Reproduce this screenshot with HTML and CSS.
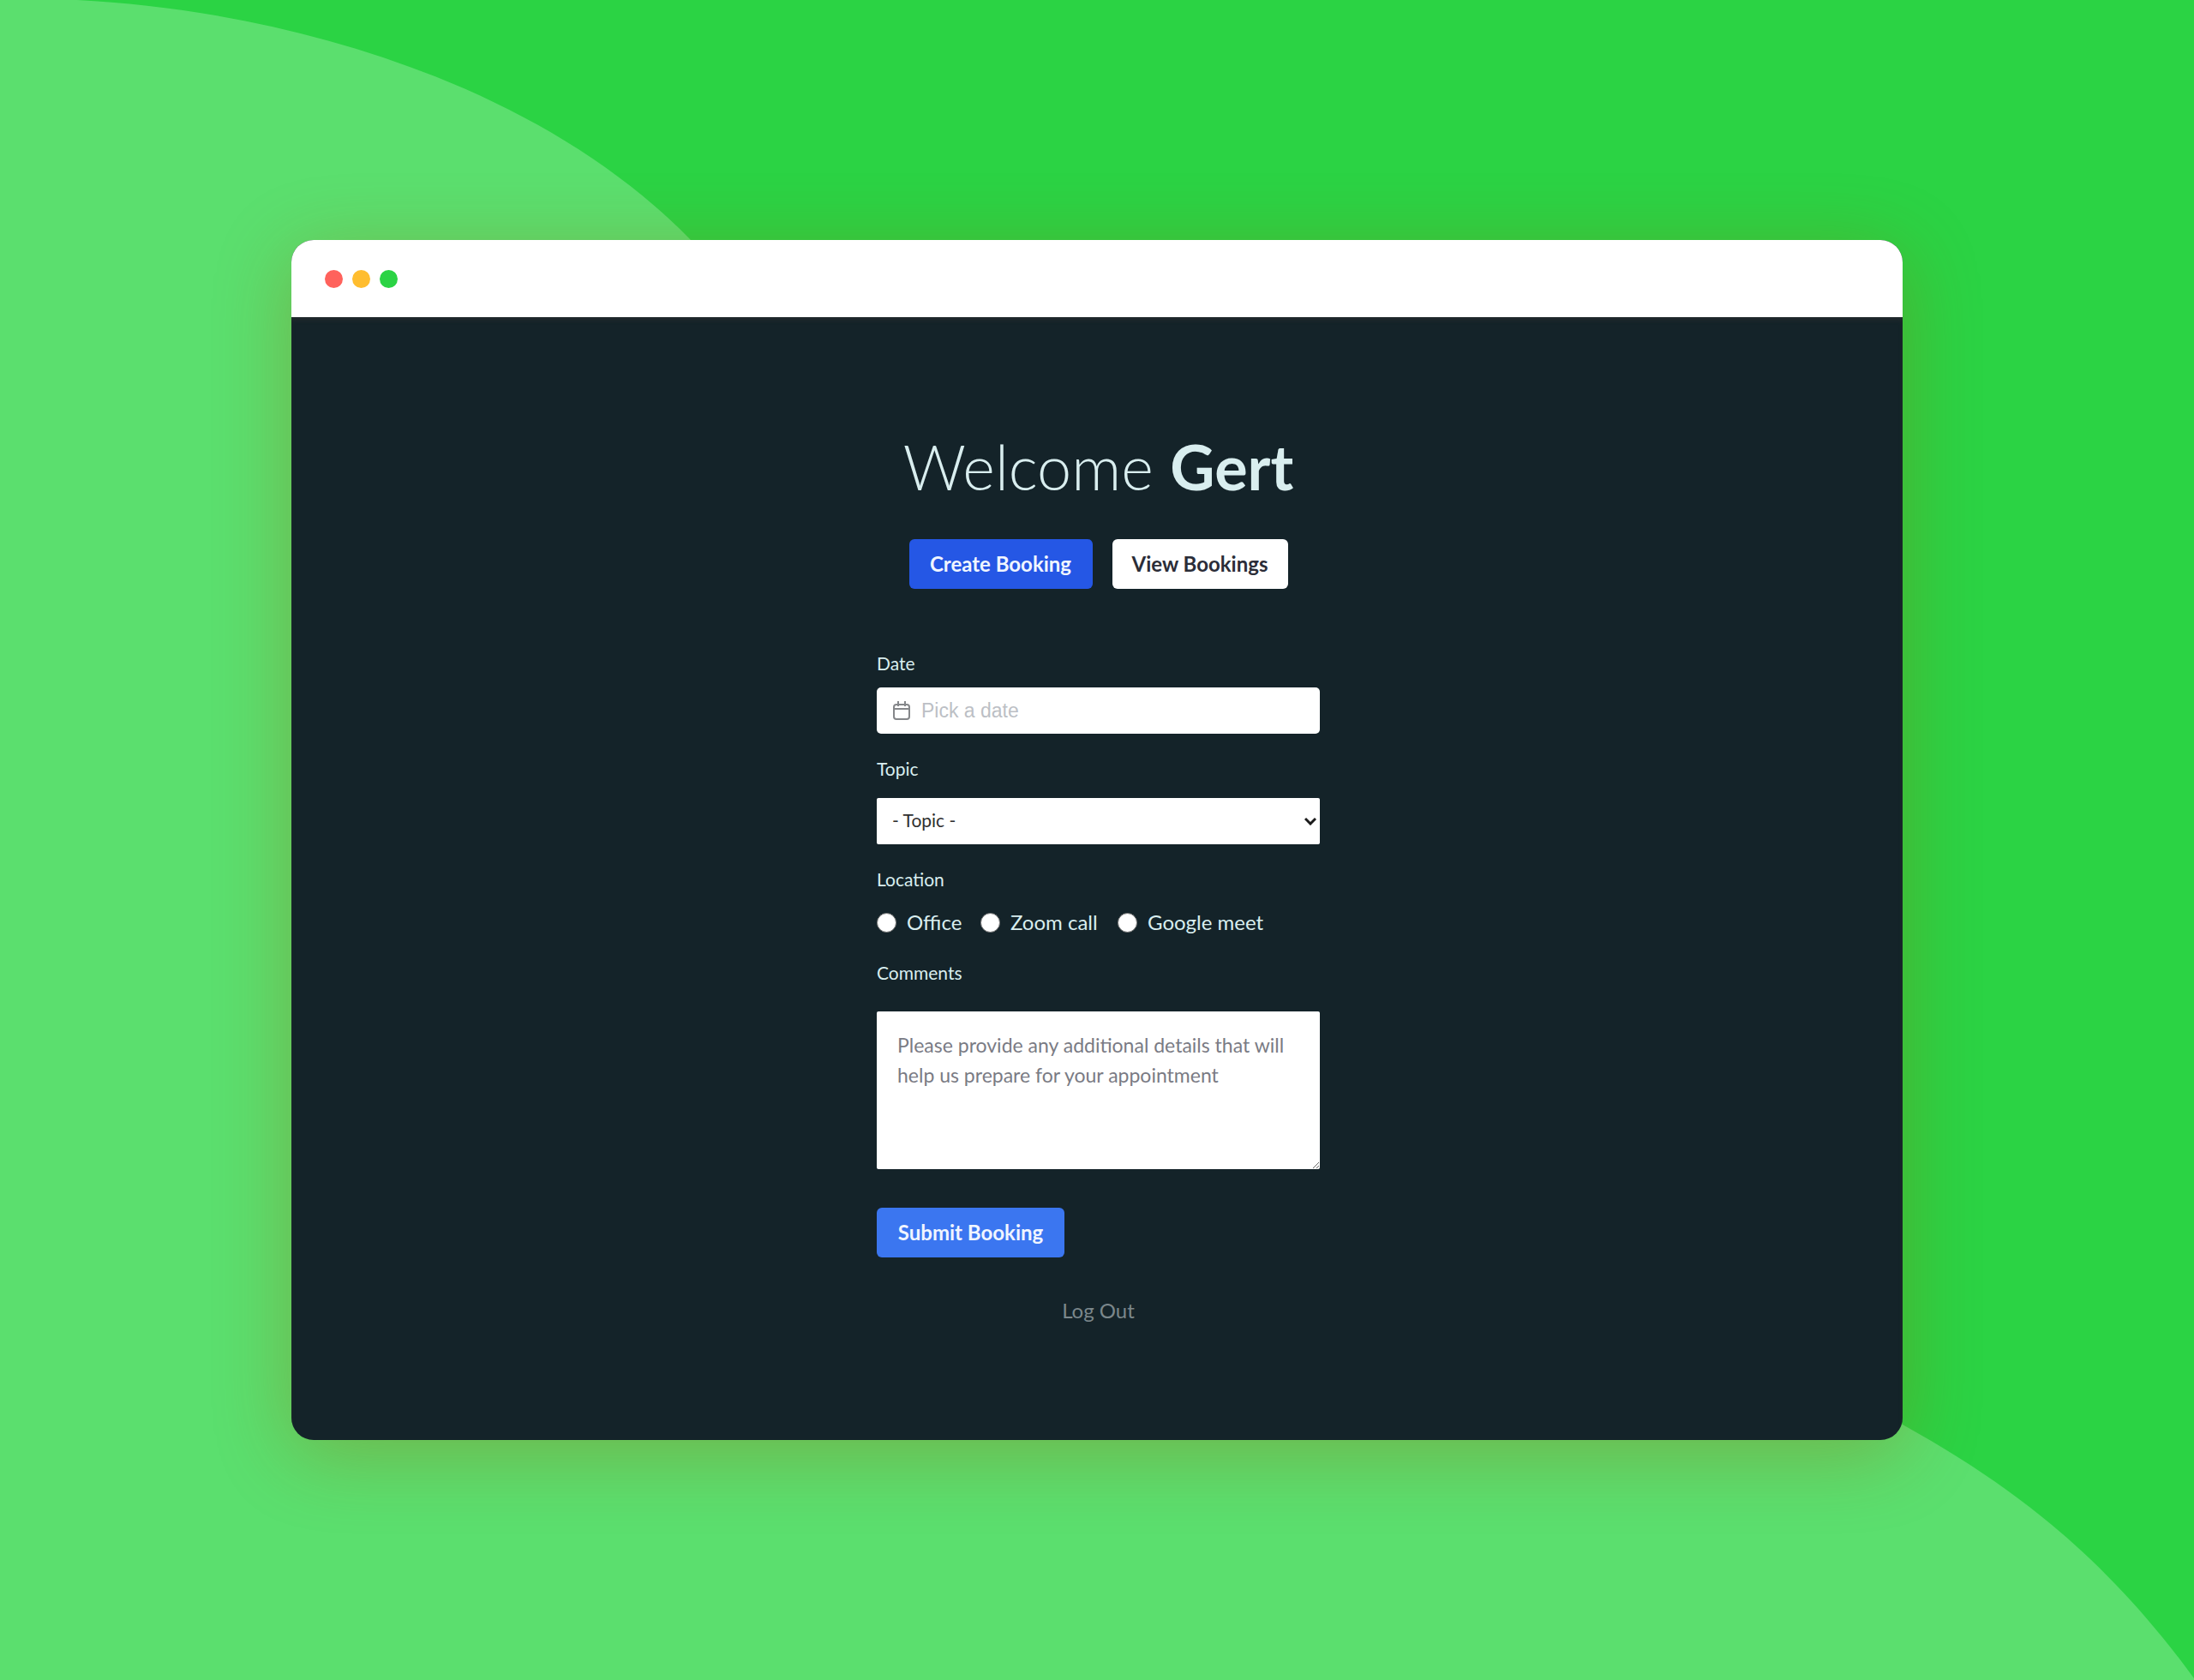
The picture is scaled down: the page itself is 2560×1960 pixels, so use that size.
FILE: index.html
```html
<!DOCTYPE html>
<html lang="en">
<head>
<meta charset="utf-8">
<meta name="viewport" content="width=device-width, initial-scale=1">
<title>Bookings</title>
<link rel="stylesheet" href="styles.css">
</head>
<body>
<div class="stage">
  <svg class="backdrop" viewBox="0 0 2560 1960" preserveAspectRatio="none" aria-hidden="true">
    <path fill="#5bdf6e" d="M0 0H90C330 12 626 95 806 280C960 480 900 900 1200 1200C1500 1400 1900 1480 2220 1662C2338 1728 2450 1807 2560 1958V1960H0Z"/>
  </svg>
  <div class="window">
    <div class="titlebar">
      <span class="dot dot-close"></span>
      <span class="dot dot-minimize"></span>
      <span class="dot dot-zoom"></span>
    </div>
    <main class="content">
      <h1 class="title">Welcome <strong>Gert</strong></h1>
      <nav class="tabs">
        <button type="button" class="button button-active tab-create">Create Booking</button>
        <button type="button" class="button button-plain tab-view">View Bookings</button>
      </nav>
      <form class="form">
        <div class="field">
          <label class="label" for="date">Date</label>
          <div class="date-box">
            <svg class="calendar" viewBox="0 0 22 24" fill="none" stroke="#85878a" stroke-width="2" aria-hidden="true">
              <rect x="2" y="5" width="18" height="17" rx="3"/>
              <path d="M2 10H20M7 1V7M15 1V7"/>
            </svg>
            <input class="date-input" id="date" type="text" placeholder="Pick a date">
          </div>
        </div>
        <div class="field field-topic">
          <label class="label" for="topic">Topic</label>
          <div class="select-box">
            <select class="select" id="topic"><option>- Topic -</option></select>
            <svg class="chevron" viewBox="0 0 14 10" fill="none" stroke="#1b1b1b" stroke-width="3" aria-hidden="true"><path d="M1 2L7 8L13 2"/></svg>
          </div>
        </div>
        <fieldset class="field field-location">
          <legend class="label">Location</legend>
          <div class="radios">
            <label class="radio-label"><input class="radio" type="radio" name="location">Office</label>
            <label class="radio-label"><input class="radio" type="radio" name="location">Zoom call</label>
            <label class="radio-label"><input class="radio" type="radio" name="location">Google meet</label>
          </div>
        </fieldset>
        <div class="field field-comments">
          <label class="label" for="comments">Comments</label>
          <textarea class="comments" id="comments" placeholder="Please provide any additional details that will help us prepare for your appointment"></textarea>
        </div>
        <button type="submit" class="button button-submit">Submit Booking</button>
      </form>
      <a class="logout" href="#">Log Out</a>
    </main>
  </div>
</div>
</body>
</html>
```
FILE: styles.css
```css
* {
  box-sizing: border-box;
}

body {
  margin: 0;
  font-family: Lato, "Open Sans", sans-serif;
  font-size: 24px;
  line-height: 36px;
  color: #d9eeef;
  background: #2bd344;
}

.stage {
  position: relative;
  min-height: 100vh;
  padding: 280px 340px;
}

.backdrop {
  position: absolute;
  inset: 0;
  width: 100%;
  height: 100%;
}

.window {
  position: relative;
  border-radius: 26px;
  overflow: hidden;
  background: #142329;
  box-shadow: 0 16px 90px rgba(157, 92, 0, 0.33);
}

.titlebar {
  display: flex;
  align-items: center;
  gap: 11px;
  height: 90px;
  padding: 0 39px;
  background: #fff;
}

.dot {
  width: 21px;
  height: 21px;
  border-radius: 50%;
}

.dot-close { background: #ff625c; }
.dot-minimize { background: #ffbd2f; }
.dot-zoom { background: #2bd344; }

.content {
  display: flex;
  flex-direction: column;
  align-items: center;
  padding: 132px 24px 133px 27px;
  box-shadow: inset 0 4px 4px #20292c;
}

.title {
  margin: 0;
  font-size: 72px;
  line-height: 84px;
  font-weight: 300;
}

.title strong {
  font-weight: 700;
}

.tabs {
  display: flex;
  gap: 23px;
  margin-top: 43px;
}

.button {
  height: 58px;
  padding: 0;
  border: 0;
  border-radius: 6px;
  font: 700 24px/36px Lato, "Open Sans", sans-serif;
  color: #f0f5ff;
  cursor: pointer;
}

.tab-create { width: 214px; }
.tab-view { width: 205px; }
.button-active { background: #2557e5; }
.button-plain { background: #fff; color: #2b2d38; }

.form {
  display: flex;
  flex-direction: column;
  width: 100%;
  max-width: 517px;
  margin-top: 73px;
}

.field {
  display: flex;
  flex-direction: column;
  gap: 14px;
  min-width: 0;
  margin: 0 0 27px;
  padding: 0;
  border: 0;
}

.field-topic { gap: 20px; }
.field-comments { gap: 31px; }

.label {
  padding: 0;
  font-size: 21px;
  line-height: 28px;
}

.date-box {
  display: flex;
  align-items: center;
  gap: 12px;
  height: 54px;
  padding: 0 18px;
  border-radius: 5px;
  background: #fff;
}

.calendar {
  flex: none;
  width: 22px;
  height: 24px;
}

.date-input {
  flex: 1;
  min-width: 0;
  padding: 0;
  border: 0;
  outline: 0;
  background: none;
  font: 23px/36px "Liberation Sans", Arial, sans-serif;
}

.date-input::placeholder {
  color: #bcbfc5;
}

.select-box {
  position: relative;
  display: flex;
}

.select {
  appearance: none;
  width: 100%;
  height: 54px;
  padding: 0 18px 2px;
  border: 0;
  border-radius: 2px;
  background: #fff;
  color: #303030;
  font: 21px/28px Lato, "Open Sans", sans-serif;
}

.chevron {
  position: absolute;
  top: 22px;
  right: 4px;
  width: 14px;
  height: 10px;
  pointer-events: none;
}

.radios {
  display: grid;
  grid-template-columns: 121px 160px auto;
  margin-top: 18px;
}

.radio-label {
  display: flex;
  align-items: center;
  gap: 12px;
  white-space: nowrap;
}

.radio {
  appearance: none;
  flex: none;
  width: 23px;
  height: 23px;
  margin: 0;
  border: 1px solid #767676;
  border-radius: 50%;
  background: #fff;
}

.comments {
  width: 100%;
  height: 184px;
  padding: 22px 24px;
  border: 0;
  border-radius: 2px;
  background: #fff;
  color: #303030;
  font: 23px/35px Lato, "Open Sans", sans-serif;
  resize: vertical;
}

.comments::placeholder {
  color: #7a7b84;
}

.button-submit {
  width: 219px;
  margin-top: 18px;
  background: #3b76f0;
}

.logout {
  margin-top: 44px;
  color: #7b878b;
  text-decoration: none;
}
```
